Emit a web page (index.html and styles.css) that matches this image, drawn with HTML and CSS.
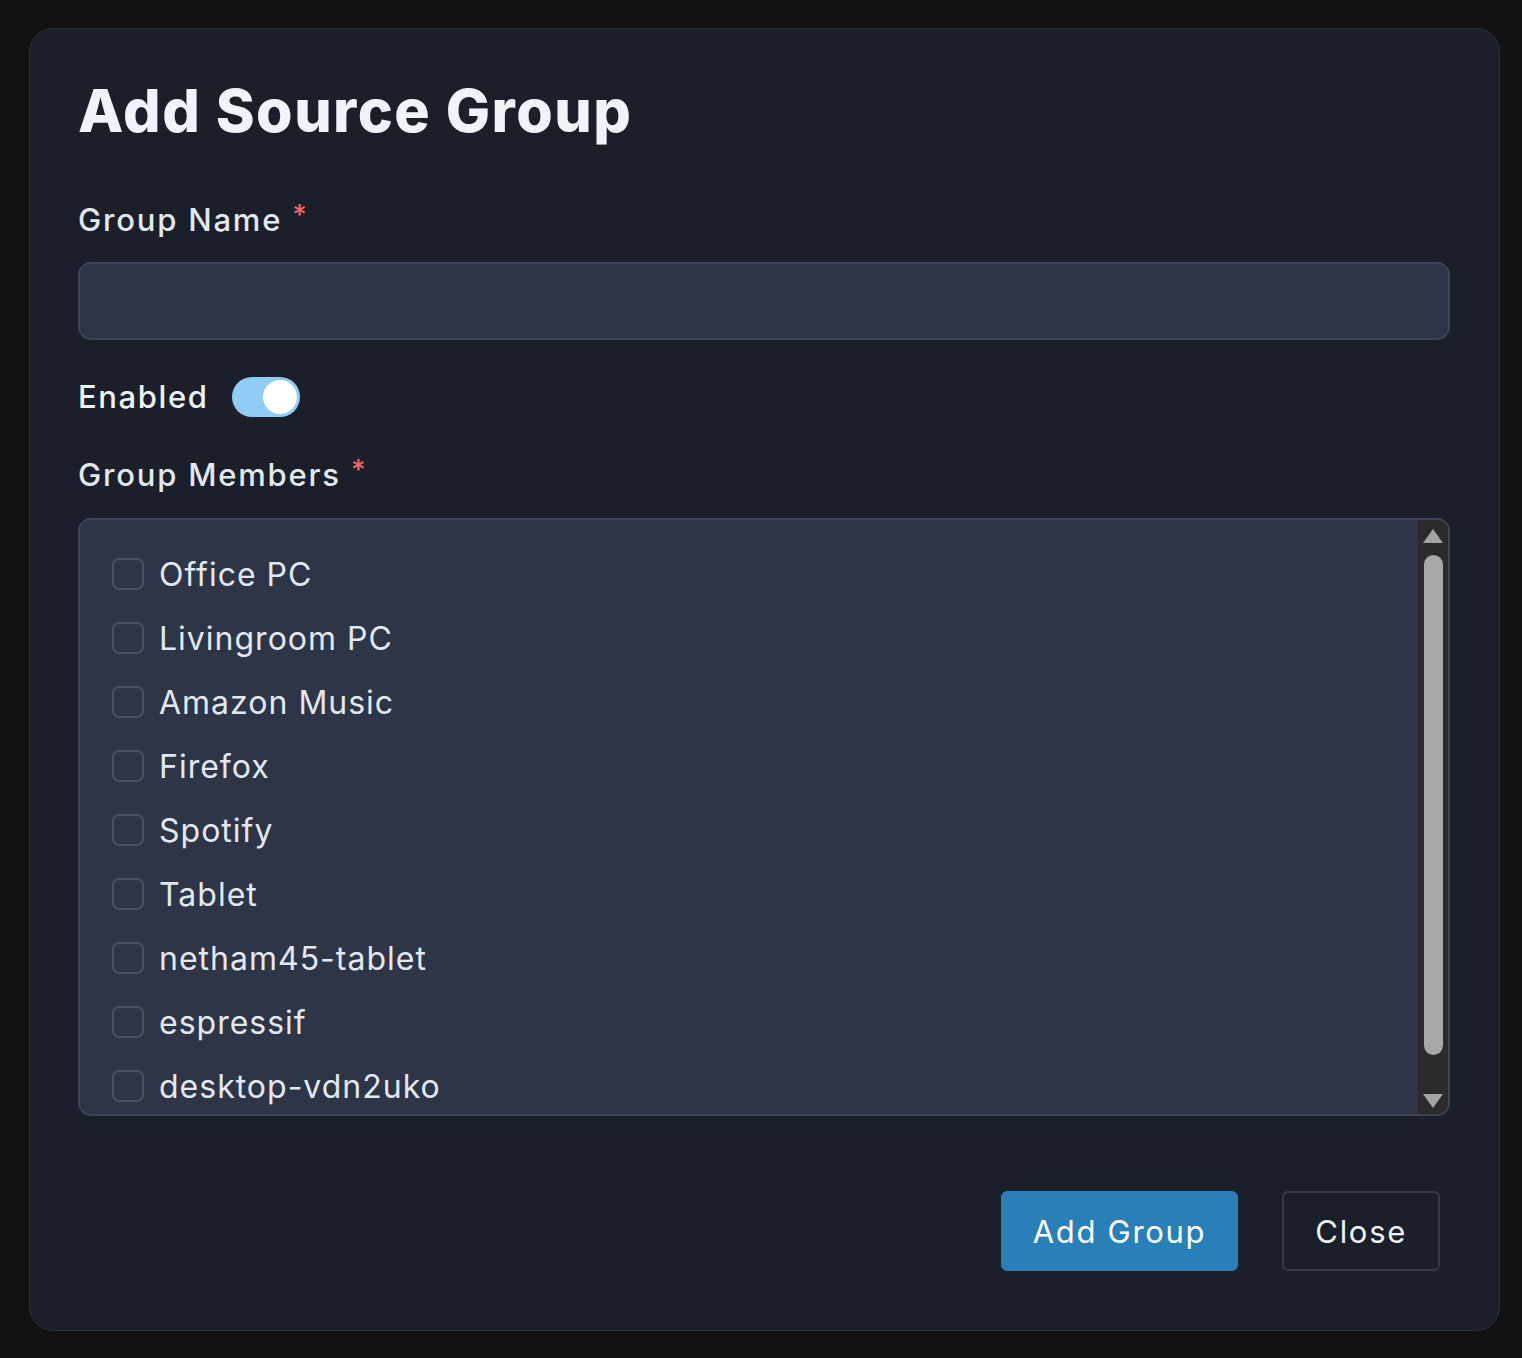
FILE: index.html
```html
<!DOCTYPE html>
<html lang="en">
<head>
<meta charset="utf-8">
<title>Add Source Group</title>
<link rel="stylesheet" href="styles.css">
</head>
<body>
<div class="modal">
  <h1 class="title">Add Source Group</h1>

  <label class="label">Group Name <span class="req">*</span></label>
  <div class="input"></div>

  <div class="toggle-row">
    <span class="toggle-label">Enabled</span>
    <span class="switch"><span class="knob"></span></span>
  </div>

  <label class="label label-members">Group Members <span class="req">*</span></label>
  <div class="listbox">
    <div class="list">
      <div class="item"><span class="check"></span><span class="name">Office PC</span></div>
      <div class="item"><span class="check"></span><span class="name">Livingroom PC</span></div>
      <div class="item"><span class="check"></span><span class="name">Amazon Music</span></div>
      <div class="item"><span class="check"></span><span class="name">Firefox</span></div>
      <div class="item"><span class="check"></span><span class="name">Spotify</span></div>
      <div class="item"><span class="check"></span><span class="name">Tablet</span></div>
      <div class="item"><span class="check"></span><span class="name">netham45-tablet</span></div>
      <div class="item"><span class="check"></span><span class="name">espressif</span></div>
      <div class="item"><span class="check"></span><span class="name">desktop-vdn2uko</span></div>
    </div>
    <div class="scrollbar">
      <span class="arrow arrow-up"></span>
      <span class="thumb"></span>
      <span class="arrow arrow-down"></span>
    </div>
  </div>

  <div class="actions">
    <button class="btn btn-primary">Add Group</button>
    <button class="btn btn-outline">Close</button>
  </div>
</div>
</body>
</html>
```
FILE: styles.css
```css
* { box-sizing: border-box; }

html, body {
  margin: 0;
  padding: 0;
  background: #121212;
}

body {
  padding: 28px 22px 27px 29px;
  font-family: Inter, "Noto Sans", "Liberation Sans", sans-serif;
  color: #e2e8f0;
}

.modal {
  width: 1471px;
  height: 1303px;
  background: #1b1f2a;
  border: 1px solid #2a3142;
  border-radius: 24px;
  padding: 46px 49px 0 48px;
  display: flex;
  flex-direction: column;
}

.title {
  margin: 0;
  font-size: 59px;
  line-height: 72px;
  font-weight: 800;
  color: #f0f4f8;
  letter-spacing: 1.5px;
}

.label {
  display: block;
  margin-top: 48px;
  font-size: 31px;
  line-height: 40px;
  font-weight: 500;
  color: #e2e8f0;
  letter-spacing: 1.8px;
}

.label-members {
  margin-top: 33px;
}

.req {
  color: #f56565;
  font-size: 28px;
  vertical-align: 6px;
  letter-spacing: 0;
}

.input {
  margin-top: 22px;
  height: 78px;
  background: #2d3546;
  border: 2px solid #3c4455;
  border-radius: 13px;
}

.toggle-row {
  margin-top: 37px;
  height: 40px;
  display: flex;
  align-items: center;
  gap: 23px;
}

.toggle-label {
  font-size: 31px;
  line-height: 40px;
  font-weight: 500;
  color: #edf2f7;
  letter-spacing: 1.6px;
}

.switch {
  width: 68px;
  height: 40px;
  border-radius: 20px;
  background: #90cdf4;
  display: flex;
  align-items: center;
  justify-content: flex-end;
  padding-right: 3px;
}

.knob {
  width: 34px;
  height: 34px;
  border-radius: 50%;
  background: #ffffff;
}

.listbox {
  margin-top: 23px;
  height: 598px;
  background: #2d3546;
  border: 2px solid #3c4455;
  border-radius: 13px;
  display: flex;
  overflow: hidden;
}

.list {
  flex: 1;
  padding: 22px 0 0 32px;
  overflow: hidden;
}

.item {
  height: 64px;
  display: flex;
  align-items: center;
  gap: 15px;
}

.check {
  width: 32px;
  height: 32px;
  border: 2px solid #4a5263;
  border-radius: 7px;
  flex: none;
}

.name {
  font-size: 32px;
  font-weight: 400;
  color: #e2e8f0;
  letter-spacing: 1px;
}

.scrollbar {
  width: 30px;
  flex: none;
  background: #2b2b2b;
  display: flex;
  flex-direction: column;
  align-items: center;
  padding: 9px 0 6px;
}

.arrow {
  width: 0;
  height: 0;
  border-left: 10px solid transparent;
  border-right: 10px solid transparent;
}

.arrow-up {
  border-bottom: 14px solid #a3a3a3;
}

.arrow-down {
  border-top: 14px solid #a3a3a3;
  margin-top: auto;
}

.thumb {
  margin-top: 12px;
  width: 19px;
  height: 500px;
  border-radius: 10px;
  background: #a8a8a8;
}

.actions {
  margin-top: 75px;
  display: flex;
  justify-content: flex-end;
  gap: 44px;
  padding-right: 10px;
}

.btn {
  height: 80px;
  padding: 0 31px;
  border-radius: 6px;
  font-family: inherit;
  font-size: 31px;
  font-weight: 400;
  color: #ffffff;
  letter-spacing: 1.7px;
}

.btn-primary {
  background: #2980b9;
  border: 1px solid #2980b9;
}

.btn-outline {
  background: transparent;
  border: 2px solid #353a46;
  color: #edf2f7;
}
```
